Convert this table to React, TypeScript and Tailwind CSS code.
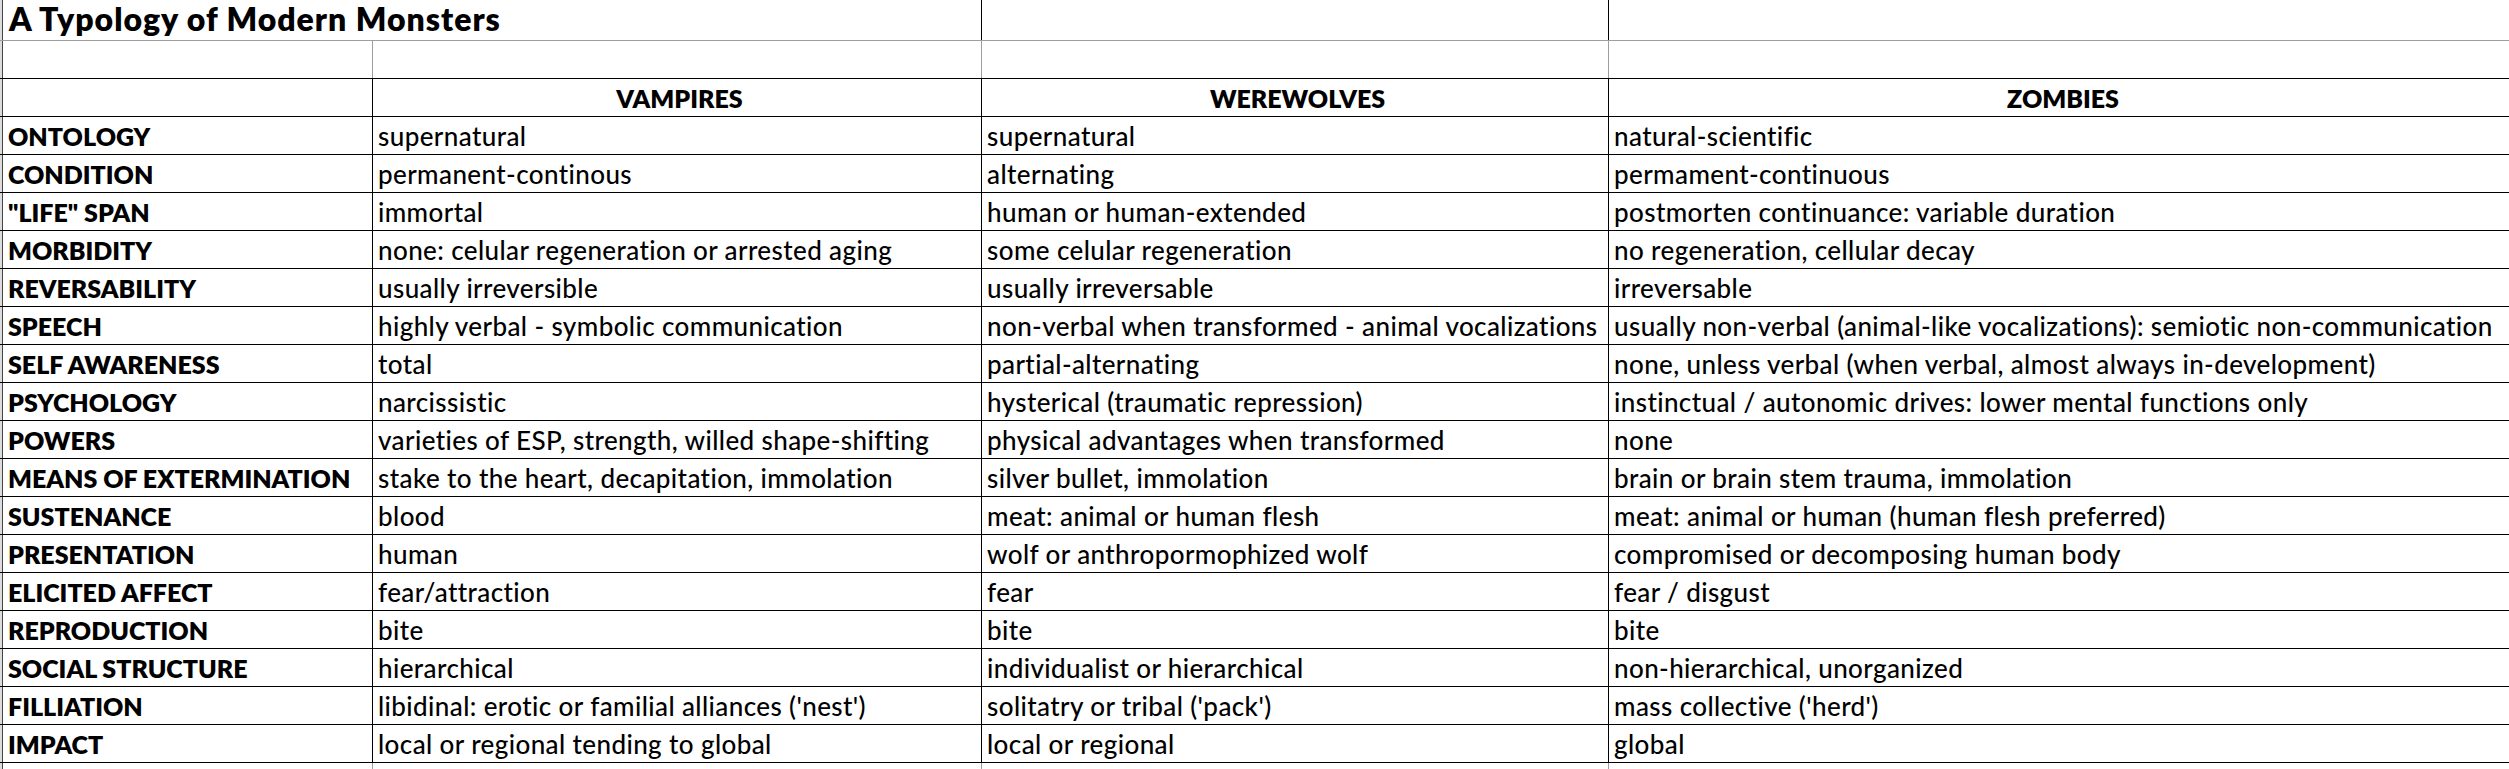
import React from 'react';

interface Trait {
  label: string;
  vampires: string;
  werewolves: string;
  zombies: string;
}

const traits: Trait[] = [
  { label: 'ONTOLOGY', vampires: 'supernatural', werewolves: 'supernatural', zombies: 'natural-scientific' },
  { label: 'CONDITION', vampires: 'permanent-continous', werewolves: 'alternating', zombies: 'permament-continuous' },
  { label: '"LIFE" SPAN', vampires: 'immortal', werewolves: 'human or human-extended', zombies: 'postmorten continuance: variable duration' },
  { label: 'MORBIDITY', vampires: 'none: celular regeneration or arrested aging', werewolves: 'some celular regeneration', zombies: 'no regeneration, cellular decay' },
  { label: 'REVERSABILITY', vampires: 'usually irreversible', werewolves: 'usually irreversable', zombies: 'irreversable' },
  { label: 'SPEECH', vampires: 'highly verbal - symbolic communication', werewolves: 'non-verbal when transformed - animal vocalizations', zombies: 'usually non-verbal (animal-like vocalizations): semiotic non-communication' },
  { label: 'SELF AWARENESS', vampires: 'total', werewolves: 'partial-alternating', zombies: 'none, unless verbal (when verbal, almost always in-development)' },
  { label: 'PSYCHOLOGY', vampires: 'narcissistic', werewolves: 'hysterical (traumatic repression)', zombies: 'instinctual / autonomic drives: lower mental functions only' },
  { label: 'POWERS', vampires: 'varieties of ESP, strength, willed shape-shifting', werewolves: 'physical advantages when transformed', zombies: 'none' },
  { label: 'MEANS OF EXTERMINATION', vampires: 'stake to the heart, decapitation, immolation', werewolves: 'silver bullet, immolation', zombies: 'brain or brain stem trauma, immolation' },
  { label: 'SUSTENANCE', vampires: 'blood', werewolves: 'meat: animal or human flesh', zombies: 'meat: animal or human (human flesh preferred)' },
  { label: 'PRESENTATION', vampires: 'human', werewolves: 'wolf or anthropormophized wolf', zombies: 'compromised or decomposing human body' },
  { label: 'ELICITED AFFECT', vampires: 'fear/attraction', werewolves: 'fear', zombies: 'fear / disgust' },
  { label: 'REPRODUCTION', vampires: 'bite', werewolves: 'bite', zombies: 'bite' },
  { label: 'SOCIAL STRUCTURE', vampires: 'hierarchical', werewolves: 'individualist or hierarchical', zombies: 'non-hierarchical, unorganized' },
  { label: 'FILLIATION', vampires: "libidinal: erotic or familial alliances ('nest')", werewolves: "solitatry or tribal ('pack')", zombies: "mass collective ('herd')" },
  { label: 'IMPACT', vampires: 'local or regional tending to global', werewolves: 'local or regional', zombies: 'global' },
];

// body text and bold text are tuned to the widths of the original sheet's font
const cellText = 'flex items-end pl-[5px] pb-[4px] text-[26px] leading-[28px] tracking-[0.4px] font-medium whitespace-nowrap';
const boldText = 'flex items-end pl-[5px] pb-[4px] text-[25px] leading-[28px] font-extrabold whitespace-nowrap';

export default function MonsterTypology() {
  return (
    <div className="w-[2509px] h-[769px] overflow-hidden bg-white text-black font-['Lato','Liberation_Sans',sans-serif]">
      {/* Title row */}
      <div className="flex h-[41px] border-b border-[#9e9e9e]">
        <div className="w-[3px] shrink-0 bg-[#dcdcdc] border-r border-[#444]" />
        <div className="w-[979px] shrink-0 border-r border-black flex items-end pl-[6px] pb-[4px]">
          <span className="text-[32px] leading-[34px] tracking-[1px] font-extrabold whitespace-nowrap">A Typology of Modern Monsters</span>
        </div>
        <div className="w-[627px] shrink-0 border-r border-black" />
        <div className="w-[903px] shrink-0" />
      </div>

      {/* Empty row */}
      <div className="flex h-[38px] border-b border-black">
        <div className="w-[3px] shrink-0 bg-[#dcdcdc] border-r border-[#444]" />
        <div className="w-[370px] shrink-0 border-r border-[#9e9e9e]" />
        <div className="w-[609px] shrink-0 border-r border-[#9e9e9e]" />
        <div className="w-[627px] shrink-0 border-r border-[#9e9e9e]" />
        <div className="w-[903px] shrink-0" />
      </div>

      {/* Header row */}
      <div className="flex h-[38px] border-b border-black">
        <div className="w-[3px] shrink-0 bg-[#dcdcdc] border-r border-[#444]" />
        <div className="w-[370px] shrink-0 border-r border-black" />
        <div className={`w-[609px] shrink-0 border-r border-black justify-center ${boldText}`}>VAMPIRES</div>
        <div className={`w-[627px] shrink-0 border-r border-black justify-center ${boldText}`}>WEREWOLVES</div>
        <div className={`w-[903px] shrink-0 justify-center ${boldText}`}>ZOMBIES</div>
      </div>

      {/* Trait rows */}
      {traits.map((t) => (
        <div key={t.label} className="flex h-[38px] border-b border-black">
          <div className="w-[3px] shrink-0 bg-[#dcdcdc] border-r border-[#444]" />
          <div className={`w-[370px] shrink-0 border-r border-black ${boldText}`}>{t.label}</div>
          <div className={`w-[609px] shrink-0 border-r border-black ${cellText}`}>{t.vampires}</div>
          <div className={`w-[627px] shrink-0 border-r border-black ${cellText}`}>{t.werewolves}</div>
          <div className={`w-[903px] shrink-0 ${cellText}`}>{t.zombies}</div>
        </div>
      ))}

      {/* Next empty row, cut off */}
      <div className="flex h-[38px]">
        <div className="w-[3px] shrink-0 bg-[#dcdcdc] border-r border-[#444]" />
        <div className="w-[370px] shrink-0 border-r border-[#9e9e9e]" />
        <div className="w-[609px] shrink-0 border-r border-[#9e9e9e]" />
        <div className="w-[627px] shrink-0 border-r border-[#9e9e9e]" />
        <div className="w-[903px] shrink-0" />
      </div>
    </div>
  );
}
